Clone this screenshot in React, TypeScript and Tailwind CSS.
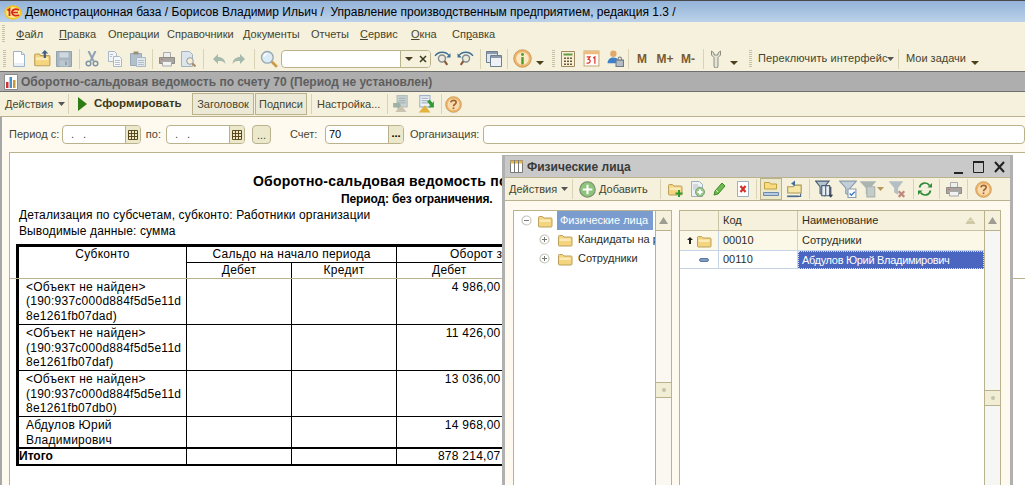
import React from "react";

const Sep = ({ h = 20 }: { h?: number }) => <div className="w-px bg-[#d8d3b4] shrink-0 mx-auto" style={{ height: h }} />;
const Slot = ({ w, children }: { w: number; children?: React.ReactNode }) => (
  <div className="flex items-center justify-center shrink-0 h-full" style={{ width: w }}>{children}</div>
);
const Grip = () => (
  <svg width="3" height="18" viewBox="0 0 3 18" className="shrink-0">
    {[0, 2, 4, 6, 8, 10, 12, 14, 16].map((y) => <rect key={y} x="0" y={y} width="3" height="1" fill="#c6c2a4" />)}
  </svg>
);
const Drop = () => (
  <svg width="8" height="14" viewBox="0 0 8 14" className="shrink-0"><path d="M0 9h8L4 13z" fill="#4a3f1e" /></svg>
);
const Caret = () => (
  <svg width="7" height="4" viewBox="0 0 7 4" className="shrink-0"><path d="M0 0h7L3.500 4z" fill="#555" /></svg>
);

const Sv = ({ s = 16, children }: { s?: number; children: React.ReactNode }) => (
  <svg width={s} height={s} viewBox="0 0 16 16" className="shrink-0">{children}</svg>
);
const Doc = () => (
  <Sv><path d="M2.500 .5h8l3 3v12h-11z" fill="#fff" stroke="#9db4cc" /><path d="M10.500 .5v3h3" fill="#dbe6f0" stroke="#9db4cc" /><path d="M3 12h10v3H3z" fill="#e8eff6" /></Sv>
);
const Folder = ({ s = 16, plus, arrow }: { s?: number; plus?: boolean; arrow?: boolean }) => (
  <Sv s={s}>
    <path d="M1.500 4.500q0-1 1-1h3l1.500 1.500h7q1 0 1 1v7q0 1-1 1h-11.500q-1 0-1-1z" fill="#f4d47e" stroke="#bda05c" />
    <path d="M2.500 6.500h11V9h-11z" fill="#fbeab5" />
    {plus && <path d="M11 9h2v2.500h2.500v2H13V16h-2v-2.500H8.500v-2H11z" fill="#2f9a2f" />}
    {arrow && <path d="M10.500 0l3 3h-2v4h-2V3h-2z" fill="#45607a" />}
  </Sv>
);
const Save = () => <Sv><path d="M.5.5h15v15H.5z" fill="#a9b6bf" stroke="#93a2ad" /><path d="M3.500 1.500h9v5h-9z" fill="#cfd8de" /><path d="M3.500 9.500h9v6h-9z" fill="#bcc8d0" /><path d="M9 10.500h2v3.500H9z" fill="#93a2ad" /></Sv>;
const Cut = () => <Sv><path d="M4.500 0l5 10M11.500 0l-5 10" stroke="#8fa3b4" strokeWidth="2" fill="none" /><circle cx="4.500" cy="12.500" r="2.300" fill="none" stroke="#7f93a5" strokeWidth="1.500" /><circle cx="11.500" cy="12.500" r="2.300" fill="none" stroke="#7f93a5" strokeWidth="1.500" /></Sv>;
const Copy = () => <Sv><path d="M1.500 .5h6l2 2v8h-8z" fill="#f2f4f6" stroke="#a8b8c6" /><path d="M6.500 5.500h6l2 2v8h-8z" fill="#f7f8fa" stroke="#a8b8c6" /><path d="M8 9.500h5M8 11.500h5M8 13.500h5M3 3.500h3M3 5.500h2" stroke="#b4c0ca" /></Sv>;
const Paste = () => <Sv><path d="M.5 2.500h11v12H.5z" fill="#b3c0cb" stroke="#9aa9b5" /><path d="M3.500 .5h5v3h-5z" fill="#98907a" /><path d="M6.500 6.500h9v9h-9z" fill="#dfe6ec" stroke="#a8b8c6" /><path d="M8 9.500h6M8 11.500h6M8 13.500h6" stroke="#b4c0ca" /></Sv>;
const Printer = () => <Sv><path d="M4.500 1.500h7v5h-7z" fill="#eee" stroke="#aaa" /><path d="M.5 6.500h15v6H.5z" fill="#a8a4a0" stroke="#8e8a86" /><path d="M3.500 10.500h9v4.500h-9z" fill="#f2f2f2" stroke="#aaa" /><path d="M2 8.500h2" stroke="#c8706a" /></Sv>;
const Preview = () => <Sv><path d="M1.500 .5h8l3 3v12h-11z" fill="#dde5ec" stroke="#a2b2c0" /><circle cx="10" cy="10" r="3.300" fill="#f4efd4" stroke="#8f9aa5" /><path d="m12.500 12.500 3 3" stroke="#b0875a" strokeWidth="2" /></Sv>;
const Undo = ({ flip }: { flip?: boolean }) => <svg width="14" height="14" viewBox="0 0 14 14" className="shrink-0"><g transform={flip ? "matrix(-1 0 0 1 14 0)" : undefined}><path d="M1 7l5-5v3c4 0 7 2 7.500 7C12 9.500 10 9 6 9v3z" fill="#a5b9ac" /></g></svg>;
const Loupe = ({ s = 18 }: { s?: number }) => <Sv s={s}><circle cx="6.500" cy="6.500" r="5.200" fill="#dcecf6" stroke="#97a8b4" strokeWidth="1.200" /><path d="M3.500 6a3.500 3.500 0 0 1 3-3" fill="none" stroke="#fff" /><path d="m10.500 10.500 4.500 4.500" stroke="#c99a4a" strokeWidth="2.500" /></Sv>;
const SearchArc = ({ flip }: { flip?: boolean }) => <Sv s={17}><g transform={flip ? "matrix(-1 0 0 1 16 0)" : undefined}><path d="M1 5.500C4 1 11 1 14 5" fill="none" stroke="#3f6f94" strokeWidth="1.300" /><path d="M15.500 3v4h-4z" fill="#3f6f94" /><circle cx="7.500" cy="8" r="3.300" fill="#eee9d8" stroke="#7c8a92" strokeWidth="1.300" /><path d="m10 10.500 2.500 3.500" stroke="#8a5a3a" strokeWidth="2" /></g></Sv>;
const Windows = () => <Sv><path d="M.5 .5h11v11H.5z" fill="#dfe6ee" stroke="#6f7f92" /><path d="M1 1h10v2H1z" fill="#8a9aac" /><path d="M4.500 4.500h11v11h-11z" fill="#eef2f6" stroke="#6f7f92" /><path d="M5 5h10v2H5z" fill="#8a9aac" /></Sv>;
const Info = () => <Sv s={19}><circle cx="8" cy="8" r="7.400" fill="#f0b56a" stroke="#b98b4c" strokeWidth=".6" /><circle cx="8" cy="8" r="5.300" fill="#fbe9c4" /><path d="M7 6.800h2V13H7z" fill="#4a9a2e" /><circle cx="8" cy="4.600" r="1.200" fill="#4a9a2e" /></Sv>;
const Help = () => <Sv s={17}><circle cx="8" cy="8" r="7.400" fill="#f0b56a" stroke="#b98b4c" strokeWidth=".6" /><circle cx="8" cy="8" r="5.500" fill="#f9dcae" /><path d="M5.500 6C6 3.500 10.500 3.500 10.500 6 10.500 8 8 7.500 8 9.700" fill="none" stroke="#a0622e" strokeWidth="1.500" /><path d="M7.200 10.800h1.600v1.600H7.200z" fill="#a0622e" /></Sv>;
const Calc = () => <Sv><path d="M1.500 .5h13v15h-13z" fill="#f7f0d6" stroke="#a08a62" /><path d="M3.500 2.500h9v2h-9z" fill="#5f9a44" /><path d="M4 6.500h2V8H4zM7 6.500h2V8H7zM10 6.500h2V8h-2zM4 9.500h2V11H4zM7 9.500h2V11H7zM10 9.500h2V11h-2zM4 12.500h2V14H4zM7 12.500h2V14H7zM10 12.500h2V14h-2z" fill="#6d5a3a" /></Sv>;
const Cal = () => <Sv s={17}><path d="M1 1h14v14H1z" fill="#fff" stroke="#c9a77a" /><path d="M1 1h14v3H1z" fill="#edbc7e" /><path d="M3.500 6.500h3l-1.500 2.300c2.300 0 2.300 3.500-.2 3.500H3.300M9.500 7.500l1.700-1v6.500" fill="none" stroke="#e2352a" strokeWidth="1.200" /></Sv>;
const UserLock = () => <Sv s={17}><circle cx="6" cy="3.500" r="3" fill="#e0a96a" /><path d="M.5 12.500c0-4 3-5.500 5.500-5.500s4 1 4 2v3.500z" fill="#3f7fc8" /><path d="M8.500 9.500h7v6h-7z" fill="#b4bcc4" stroke="#6f7a85" /><path d="M10.500 9.500V8a1.500 1.500 0 0 1 3 0v1.500" fill="none" stroke="#6f7a85" /></Sv>;
const Wrench = () => <svg width="14" height="18" viewBox="0 0 14 18" className="shrink-0"><path d="M2.500 1v4l2.500 2.500V16a2 2 0 0 0 4 0V7.500L11.500 5V1L9 3v2H5V3z" fill="#e3e3da" stroke="#8d8d80" /></svg>;
const Play = () => <svg width="9" height="14" viewBox="0 0 9 14" className="shrink-0"><path d="M0 0l9 7-9 7z" fill="#2e7d14" /></svg>;
const Report = () => <Sv><path d="M1.500 .5h13v15h-13z" fill="#fff" stroke="#8a8a8a" /><path d="M3 8h2.500v6H3z" fill="#c33" /><path d="M6.500 3h2.500v11H6.500z" fill="#4a8fc2" /><path d="M10 6h2.500v8H10z" fill="#c69a3a" /></Sv>;
const ArrowsGray = () => <Sv s={18}><path d="M4.500 .5h9v10h-9z" fill="#c9d2d2" stroke="#b4bebe" /><path d="M6 3h6M6 5h6M6 7h6" stroke="#a8b4b4" /><path d="M8 9l5 6H3z" fill="#c8c4b0" /><path d="M1 7l4 0 0-2 3 4-3 4v-2H1z" fill="#9fb0a4" /></Sv>;
const ArrowsOn = () => <Sv s={18}><path d="M2.500 .5h9v10h-9z" fill="#eef2f6" stroke="#9db4cc" /><path d="M4 3h6M4 5h6M4 7h6" stroke="#a8b8c6" /><path d="M7 9l5 6.500H1.500z" fill="#e2b23e" /><path d="M15 5v6h-5l2-2-3-3 2-2 3 3z" fill="#2f9a2f" /></Sv>;
const FunnelCols = () => <Sv s={18}><path d="M.5 1h12l-4 5v8l-4-2V6z" fill="#b2c2d0" stroke="#4a5f74" /><path d="M6 5h7v9H6z" fill="#e8eef3" stroke="#4a5f74" /><path d="M9.500 5v9" stroke="#4a5f74" /><path d="M14 6v9m-1.500-2 1.500 2 1.500-2" stroke="#2e3e50" fill="none" /></Sv>;
const FunnelCheck = () => <Sv s={18}><path d="M.5 1h15l-5.500 6v7l-4-2V7z" fill="#c2cfda" stroke="#8a9cac" /><path d="M8 8h7v7.500H8z" fill="#fff" stroke="#8a9cac" /><path d="M9.500 12l1.500 1.500 3-3" stroke="#3f7fc8" fill="none" strokeWidth="1.300" /></Sv>;
const FunnelDis = () => <Sv s={18}><path d="M.5 1h15l-5.500 6v7l-4-2V7z" fill="#aab5b2" /><path d="M7 6h7v9H7z" fill="#c4ccc8" stroke="#a8b2ae" /></Sv>;
const FunnelX = () => <Sv s={18}><path d="M.5 1h13L9 7v6L5.500 11V7z" fill="#b4bec4" /><path d="M9.500 10l5 5M14.500 10l-5 5" stroke="#c08a80" strokeWidth="2" /></Sv>;

const Rows = [
  { a: ["<Объект не найден>", "(190:937c000d884f5d5e11d", "8e1261fb07dad)"], v: "4 986,00", h: 46 },
  { a: ["<Объект не найден>", "(190:937c000d884f5d5e11d", "8e1261fb07daf)"], v: "11 426,00", h: 46 },
  { a: ["<Объект не найден>", "(190:937c000d884f5d5e11d", "8e1261fb07db0)"], v: "13 036,00", h: 46 },
  { a: ["Абдулов Юрий", "Владимирович"], v: "14 968,00", h: 31 },
];

const Track = ({ top, bg }: { top: number; bg: string }) => (
  <div className={`w-[17px] shrink-0 flex flex-col border-l border-r border-[#b9b28c] ${bg}`}>
    <div className="h-[20px] shrink-0 bg-[#f5f1dc] border-b border-[#b9b28c] flex items-center justify-center">
      <svg width="9" height="7" viewBox="0 0 9 7"><path d="M4.500 0 9 7H0z" fill="#9d9d90" /></svg>
    </div>
    <div className="h-[16px] shrink-0 bg-[#f2eed6] border-y border-[#b9b28c] flex items-center justify-center" style={{ marginTop: top }}>
      <div className="w-[4px] h-[4px] rounded-full bg-[#c5c2aa]" />
    </div>
  </div>
);

const CalBtn = () => (
  <div className="w-[15px] h-full bg-[#ece8cc] border-l border-[#b9b28c] flex items-center justify-center rounded-r-[3px]">
    <svg width="10" height="10" viewBox="0 0 10 10"><path d="M.5.5h9v9h-9zM.5 3.500h9M.5 6.500h9M3.500.5v9M6.500.5v9" fill="none" stroke="#5a4a1a" /></svg>
  </div>
);
const Expand = ({ open }: { open?: boolean }) => (
  <svg width="11" height="11" viewBox="0 0 11 11" className="shrink-0"><circle cx="5.500" cy="5.500" r="4.500" fill="#fff" stroke="#c4c4ba" strokeWidth="1.200" /><path d={open ? "M3 5.500h5" : "M3 5.500h5M5.500 3v5"} stroke="#777" /></svg>
);

export default function App() {
  return (
    <div className="relative w-[1025px] h-[485px] overflow-hidden flex flex-col bg-[#f5f1dc] text-[11px] text-[#3d3c2a] font-['Liberation_Sans',sans-serif]">
      {/* title */}
      <div className="h-[22px] shrink-0 flex items-center border-t border-[#4a4a4a] bg-gradient-to-b from-[#93b3d8] to-[#bcd2ea] text-[12px] text-black">
        <div className="w-[25px] flex justify-center pt-[1px]">
          <svg width="18" height="15" viewBox="0 0 18 15"><ellipse cx="9" cy="7.500" rx="8.700" ry="7.200" fill="#f5c51f" /><ellipse cx="9" cy="7.500" rx="7" ry="5.500" fill="#fbe58a" /><path d="M3.500 5.500l2-1.500v7" fill="none" stroke="#d62a1d" strokeWidth="1.800" /><path d="M15 5C11 3 7.500 5 8 8c.5 2.500 4 3.500 7 2M8.500 7.500H14" fill="none" stroke="#d62a1d" strokeWidth="1.700" /></svg>
        </div>
        <span className="whitespace-nowrap">Демонстрационная база / Борисов Владимир Ильич /&nbsp; Управление производственным предприятием, редакция 1.3 /</span>
      </div>
      {/* menu */}
      <div className="h-[24px] shrink-0 flex items-center text-[#46452f]">
        <div className="w-[16px] pl-[2px]"><Grip /></div>
        {[
          [43, <><u>Ф</u>айл</>], [49, <><u>П</u>равка</>], [59, <>Операции</>], [76, <>Справочники</>], [68, <>Документы</>], [49, <>Отчеты</>], [51, <><u>С</u>ервис</>], [41, <><u>О</u>кна</>], [60, <>Сп<u>р</u>авка</>],
        ].map(([w, c], i) => (
          <div key={i} style={{ width: w as number }} className="shrink-0 whitespace-nowrap">{c as React.ReactNode}</div>
        ))}
      </div>
      {/* toolbar */}
      <div className="h-[25px] shrink-0 flex items-center text-[#46452f]">
        <Slot w={8}><Grip /></Slot>
        <Slot w={22}><Doc /></Slot>
        <Slot w={24}><Folder s={18} arrow /></Slot>
        <Slot w={20}><Save /></Slot>
        <Slot w={10}><Sep /></Slot>
        <Slot w={16}><Cut /></Slot>
        <Slot w={30}><Copy /></Slot>
        <Slot w={16}><Paste /></Slot>
        <Slot w={12}><Sep /></Slot>
        <Slot w={18}><Printer /></Slot>
        <Slot w={24}><Preview /></Slot>
        <Slot w={6}><Sep /></Slot>
        <Slot w={26}><Undo /></Slot>
        <Slot w={14}><Undo flip /></Slot>
        <Slot w={16}><Sep /></Slot>
        <Slot w={14}><Loupe /></Slot>
        <div className="w-[150px] h-[18px] shrink-0 flex items-center bg-white border border-[#b9b28c] rounded-[4px] ml-[5px]">
          <div className="flex-1" />
          <div className="w-[16px] h-full bg-[#f5f1dc] border-l border-[#b9b28c] flex items-center justify-center"><svg width="8" height="4" viewBox="0 0 8 4"><path d="M0 0h8L4 4z" fill="#4a3f1e" /></svg></div>
          <div className="w-[14px] h-full bg-[#f5f1dc] flex items-center justify-center rounded-r-[3px]"><svg width="8" height="8" viewBox="0 0 8 8"><path d="M1 1l6 6M7 1 1 7" stroke="#3b3a1a" strokeWidth="1.500" /></svg></div>
        </div>
        <Slot w={22}><SearchArc /></Slot>
        <Slot w={24}><SearchArc flip /></Slot>
        <Slot w={6}><Sep /></Slot>
        <Slot w={22}><Windows /></Slot>
        <Slot w={4}><Sep /></Slot>
        <Slot w={26}><Info /></Slot>
        <Slot w={10}><Drop /></Slot>
        <Slot w={16}><Grip /></Slot>
        <Slot w={14}><Calc /></Slot>
        <Slot w={32}><Cal /></Slot>
        <Slot w={16}><UserLock /></Slot>
        <Slot w={10}><Sep /></Slot>
        <div className="flex items-center font-bold text-[12px] text-[#7a5a32] shrink-0">
          <div className="w-[18px] text-center">M</div>
          <div className="w-[28px] text-center">M+</div>
          <div className="w-[18px] text-center whitespace-nowrap">M-</div>
        </div>
        <Slot w={12}><Sep /></Slot>
        <Slot w={14}><Wrench /></Slot>
        <Slot w={22}><Drop /></Slot>
        <Slot w={10}><Grip /></Slot>
        <div className="shrink-0 w-[131px] pl-[3px] whitespace-nowrap tracking-[0.1px]">Переключить интерфейс</div>
        <Slot w={8}><Caret /></Slot>
        <Slot w={8}><Sep /></Slot>
        <div className="shrink-0 w-[66px] pl-[4px] whitespace-nowrap">Мои задачи</div>
        <Slot w={14}><Drop /></Slot>
      </div>
      {/* document title */}
      <div className="h-[21px] shrink-0 flex items-center bg-[#aeaeae] border-y border-[#6f6f6f] text-[12px] font-bold text-[#5e5e5e]">
        <div className="w-[21px] flex justify-center"><Report /></div>
        <span className="whitespace-nowrap">Оборотно-сальдовая ведомость по счету 70 (Период не установлен)</span>
      </div>
      {/* actions */}
      <div className="h-[25px] shrink-0 flex items-center border-b border-[#b9b28c] text-[#46452f]">
        <div className="pl-[5px] w-[55px] whitespace-nowrap">Действия</div>
        <Slot w={12}><Caret /></Slot>
        <Slot w={3}><Sep /></Slot>
        <Slot w={24}><Play /></Slot>
        <div className="w-[97px] font-bold text-[11.5px] whitespace-nowrap text-[#3c381c] shrink-0">Сформировать</div>
        <div className="w-[62px] h-[22px] bg-[#ecead6] border border-[#b9b28c] flex items-center justify-center shrink-0 ml-[1px]">Заголовок</div>
        <div className="w-[52px] h-[22px] bg-[#ecead6] border border-[#b9b28c] flex items-center justify-center shrink-0 ml-[1px]">Подписи</div>
        <Slot w={9}><Sep /></Slot>
        <div className="w-[69px] pl-[1px] whitespace-nowrap shrink-0">Настройка...</div>
        <Slot w={4}><Sep /></Slot>
        <Slot w={24}><ArrowsGray /></Slot>
        <Slot w={26}><ArrowsOn /></Slot>
        <Slot w={4}><Sep /></Slot>
        <Slot w={20}><Help /></Slot>
      </div>
      {/* filter + report */}
      <div className="flex-1 min-h-0 flex flex-col bg-[#fffaf0] pl-[7px] border-l-2 border-[#a8a8a8]">
        <div className="h-[35px] shrink-0 flex items-center text-[#46452f]">
          <span className="w-[53px] whitespace-nowrap shrink-0">Период с:</span>
          <div className="w-[79px] h-[19px] bg-white border border-[#b9b28c] rounded-[4px] flex items-center shrink-0">
            <span className="flex-1 pl-[8px] tracking-[3px]">. .</span>
            <CalBtn />
          </div>
          <span className="w-[25px] text-right pr-[5px] shrink-0">по:</span>
          <div className="w-[79px] h-[19px] bg-white border border-[#b9b28c] rounded-[4px] flex items-center shrink-0">
            <span className="flex-1 pl-[8px] tracking-[3px]">. .</span>
            <CalBtn />
          </div>
          <div className="w-[19px] h-[19px] ml-[7px] bg-[#ece8cc] border border-[#b9b28c] rounded-[4px] text-center leading-[18px] shrink-0">...</div>
          <span className="w-[54px] pl-[19px] whitespace-nowrap shrink-0">Счет:</span>
          <div className="w-[79px] h-[19px] bg-white border border-[#b9b28c] rounded-[4px] flex items-center shrink-0 text-black">
            <span className="flex-1 pl-[3px]">70</span>
            <div className="w-[15px] h-full bg-[#ece8cc] border-l border-[#b9b28c] text-center font-bold leading-[14px] rounded-r-[3px]">...</div>
          </div>
          <span className="ml-[6px] w-[73px] whitespace-nowrap shrink-0">Организация:</span>
          <div className="flex-1 h-[19px] bg-white border border-[#b9b28c] rounded-[4px]" />
        </div>
        <div className="relative flex-1 min-h-0 bg-white border-t border-l border-[#b9b28c] overflow-hidden text-black text-[12px]">
          <div className="h-[19px]" />
          <div className="w-[1100px] pl-[6px]">
            <div className="h-[19px] pl-[237px] text-[14px] tracking-[0.2px] font-bold leading-[18px] whitespace-nowrap">Оборотно-сальдовая ведомость по счету 70</div>
            <div className="h-[16px] pl-[325px] font-bold leading-[16px] tracking-[-0.15px] whitespace-nowrap">Период: без ограничения.</div>
            <div className="h-[16px] pl-[3px] leading-[16px] tracking-[0.12px] whitespace-nowrap">Детализация по субсчетам, субконто: Работники организации</div>
            <div className="h-[16px] pl-[3px] leading-[16px] tracking-[0.12px] whitespace-nowrap">Выводимые данные: сумма</div>
            <div className="h-[5px]" />
            <table className="table-fixed border-collapse w-[600px] leading-[15px] tracking-[0.25px]">
              <colgroup><col className="w-[169px]" /><col className="w-[105px]" /><col className="w-[105px]" /><col className="w-[221px]" /></colgroup>
              <tbody>
                <tr className="h-[15px] border-t-[3px] border-l-[3px] border-black">
                  <td rowSpan={2} className="align-top text-center border-r border-black">Субконто</td>
                  <td colSpan={2} className="text-center border-r border-b border-black">Сальдо на начало периода</td>
                  <td className="pl-[53px] border-b border-black whitespace-nowrap">Оборот за период</td>
                </tr>
                <tr className="h-[16px] border-l-[3px] border-black">
                  <td className="text-center border-r border-black">Дебет</td>
                  <td className="text-center border-r border-black">Кредит</td>
                  <td className="pl-[35px]">Дебет</td>
                </tr>
                {Rows.map((r, i) => (
                  <tr key={i} style={{ height: r.h }} className="border-l-[3px] border-b border-black align-top">
                    <td className="pl-[7px] pt-[1px] leading-[14.67px] border-r border-black whitespace-nowrap">{r.a.map((t) => <div key={t}>{t}</div>)}</td>
                    <td className="border-r border-black" />
                    <td className="border-r border-black" />
                    <td className="pr-[117px] pt-[1px] leading-[14.67px] text-right">{r.v}</td>
                  </tr>
                ))}
                <tr className="h-[15px] border-l-[3px] border-t-[2px] border-b-[2px] border-black">
                  <td className="font-bold border-r border-black tracking-normal">Итого</td>
                  <td className="border-r border-black" />
                  <td className="border-r border-black" />
                  <td className="pr-[117px] text-right">878 214,07</td>
                </tr>
              </tbody>
            </table>
          </div>
          <div className="absolute left-0 right-0 top-[125px] h-px bg-[#b9b28c]" />
        </div>
      </div>
      {/* floating window */}
      <div className="absolute left-[502px] top-[155px] w-[511px] h-[330px] flex flex-col bg-[#f5f1dc] border-l-[3px] border-r-[3px] border-t border-[#b0b0b0]">
        <div className="h-[21px] shrink-0 flex items-center bg-[#c9c9c9] text-[12px] font-bold text-[#3a3a3a]">
          <div className="w-[22px] flex justify-center">
            <svg width="13" height="13" viewBox="0 0 13 13"><path d="M.5.5h12v12H.5z" fill="#fff" stroke="#7a7a7a" /><path d="M.5.5h12v3H.5z" fill="#e7b64a" /><path d="M4.500 0v13M8.500 0v13" stroke="#7a7a7a" /></svg>
          </div>
          <span className="flex-1">Физические лица</span>
          <svg width="56" height="14" viewBox="0 0 56 14" className="mr-[3px]"><path d="M3 12h9v2H3z" fill="#222" /><path d="M22.500 1.500h10v11h-10z" fill="none" stroke="#222" /><path d="M22 1h11v2H22z" fill="#222" /><path d="M44 2l9 10M53 2l-9 10" stroke="#222" strokeWidth="2" /></svg>
        </div>
        <div className="h-[24px] shrink-0 flex items-center border-y border-[#b9b28c] bg-[#f5f1dc] text-[#46452f]">
          <div className="w-[54px] pl-[4px] whitespace-nowrap shrink-0">Действия</div>
          <Slot w={10}><Caret /></Slot>
          <Slot w={6}><Sep /></Slot>
          <Slot w={24}><Sv s={17}><circle cx="8" cy="8" r="7.300" fill="#8cc47a" stroke="#7c8a72" /><path d="M7 3.500h2V7h3.500v2H9v3.500H7V9H3.500V7H7z" fill="#fff" /></Sv></Slot>
          <div className="w-[54px] whitespace-nowrap shrink-0"><u>Д</u>обавить</div>
          <Slot w={14}><Sep /></Slot>
          <Slot w={16}><Folder plus /></Slot>
          <Slot w={28}><Sv><path d="M2.500 .5h8l3 3v12h-11z" fill="#eef1f3" stroke="#9fb0bf" /><path d="M4 4h5M4 6h7M4 8h4" stroke="#b4c0ca" /><circle cx="11" cy="11" r="4.500" fill="#9ac88a" stroke="#7f9f74" /><path d="M10 8.500h2V10h1.500v2H12v1.500h-2V12H8.500v-2H10z" fill="#fff" /></Sv></Slot>
          <Slot w={16}><Sv><path d="M11 2l3 3-7 8-4 1 1-4z" fill="#6dbb4c" stroke="#3d8a2a" /><path d="M5 9l2 2" stroke="#d8efc8" /></Sv></Slot>
          <div className="w-[4px] shrink-0" />
          <Slot w={24}><Sv><path d="M2.500 .5h11v15h-11z" fill="#fff" stroke="#9fb0bf" /><path d="M5.500 5l5 6M10.500 5l-5 6" stroke="#d1322a" strokeWidth="2.200" /></Sv></Slot>
          <Slot w={2}><Sep /></Slot>
          <div className="w-[22px] h-[22px] ml-[3px] bg-[#ece8cc] border border-[#b9b28c] flex items-center justify-center shrink-0"><Sv><path d="M1.500 1.500h5l1 1.500h6v5h-12z" fill="#f7dc80" stroke="#c4a040" /><path d="M.5 11.500h15v3H.5z" fill="#b4cae0" stroke="#6f8aa8" /></Sv></div>
          <Slot w={26}><Sv s={18}><path d="M1.500 6h5l1-1.500h6v7h-12z" fill="#f7e7a8" stroke="#a89a58" /><path d="M1 14.500h10" stroke="#4a6a8a" strokeWidth="1.500" /><path d="M13 12v2.500H10" stroke="#4a6a8a" fill="none" /><path d="M8 .5 4.500 3 8 5.500z" fill="#3f6f9a" /></Sv></Slot>
          <Slot w={2}><Sep /></Slot>
          <Slot w={28}><FunnelCols /></Slot>
          <Slot w={20}><FunnelCheck /></Slot>
          <Slot w={20}><FunnelDis /></Slot>
          <Slot w={4}><svg width="7" height="4" viewBox="0 0 7 4" className="shrink-0"><path d="M0 0h7L3.500 4z" fill="#b49a5a" /></svg></Slot>
          <Slot w={30}><FunnelX /></Slot>
          <Slot w={2}><Sep /></Slot>
          <Slot w={22}><Sv><path d="M2.500 6.500a5.500 5.500 0 0 1 10-2" fill="none" stroke="#2f8a3a" strokeWidth="1.700" /><path d="M15 2v4.500h-4.500z" fill="#2f8a3a" /><path d="M13.500 9.500a5.500 5.500 0 0 1-10 2" fill="none" stroke="#2f8a3a" strokeWidth="1.700" /><path d="M1 14V9.500h4.500z" fill="#2f8a3a" /></Sv></Slot>
          <Slot w={6}><Sep /></Slot>
          <Slot w={24}><Printer /></Slot>
          <Slot w={2}><Sep /></Slot>
          <Slot w={30}><Help /></Slot>
        </div>
        <div className="flex-1 min-h-0 flex bg-[#fffaf0] pt-[9px] pl-[8px] pr-[9px] text-[#2e2d1c]">
          {/* tree */}
          <div className="w-[159px] shrink-0 flex border-l border-t border-[#b9b28c] bg-white">
            <div className="flex-1 min-w-0 overflow-hidden whitespace-nowrap">
              <div className="h-[19px] flex items-center">
                <Slot w={24}><Expand open /></Slot>
                <Slot w={14}><Folder /></Slot>
                <span className="bg-[#7a9ccf] text-white h-[19px] leading-[19px] pl-[3px] w-[96px] ml-[5px]">Физические лица</span>
              </div>
              <div className="h-[19px] flex items-center">
                <Slot w={43}><span className="ml-[18px] flex"><Expand /></span></Slot>
                <Slot w={16}><Folder /></Slot>
                <span className="ml-[5px]">Кандидаты на работу</span>
              </div>
              <div className="h-[19px] flex items-center">
                <Slot w={43}><span className="ml-[18px] flex"><Expand /></span></Slot>
                <Slot w={16}><Folder /></Slot>
                <span className="ml-[5px]">Сотрудники</span>
              </div>
            </div>
            <Track top={151} bg="bg-[#faf8f0]" />
          </div>
          <div className="w-[7px] shrink-0" />
          {/* list */}
          <div className="flex-1 min-w-0 flex border-l border-t border-[#b9b28c] bg-white">
            <div className="flex-1 min-w-0 whitespace-nowrap">
              <div className="h-[20px] flex bg-[#f5f1dc] border-b border-[#c8c4a4]">
                <div className="w-[39px] border-r border-[#c8c4a4]" />
                <div className="w-[79px] pl-[4px] leading-[19px] border-r border-[#c8c4a4]">Код</div>
                <div className="flex-1 pl-[4px] leading-[19px] flex items-center justify-between pr-[8px]">Наименование
                  <svg width="11" height="8" viewBox="0 0 11 8"><path d="M5.500 0 8 3H3zM2.500 3.500h6l2 3.500H.5z" fill="#cfc9a6" /></svg>
                </div>
              </div>
              <div className="h-[20px] flex bg-[#fbf8e8] border-b border-[#c5d5e5] items-center">
                <div className="w-[39px] flex items-center border-r border-[#c5d5e5] h-full pl-[7px] gap-[3px]">
                  <svg width="6" height="7" viewBox="0 0 6 7" className="shrink-0"><path d="M3 0l3 3H4v4H2V3H0z" fill="#222" /></svg>
                  <Folder />
                </div>
                <div className="w-[79px] pl-[4px] border-r border-[#c5d5e5] h-full leading-[19px]">00010</div>
                <div className="flex-1 pl-[4px]">Сотрудники</div>
              </div>
              <div className="h-[18px] flex border-b border-[#c5d5e5] items-center">
                <div className="w-[39px] flex items-center justify-end pr-[9px] border-r border-[#c5d5e5] h-full">
                  <div className="w-[10px] h-[4px] rounded-[2px] bg-[#7f9bc2] border border-[#5f7a9f]" />
                </div>
                <div className="w-[79px] pl-[4px] border-r border-[#c5d5e5] h-full leading-[17px]">00110</div>
                <div className="flex-1 h-[18px] pl-[3px] bg-[#4a66c0] text-white leading-[16px] tracking-[-0.3px] border border-dotted border-[#d8dff0]">Абдулов Юрий Владимирович</div>
              </div>
            </div>
            <Track top={159} bg="bg-[#f6f6f4]" />
          </div>
        </div>
      </div>
    </div>
  );
}
